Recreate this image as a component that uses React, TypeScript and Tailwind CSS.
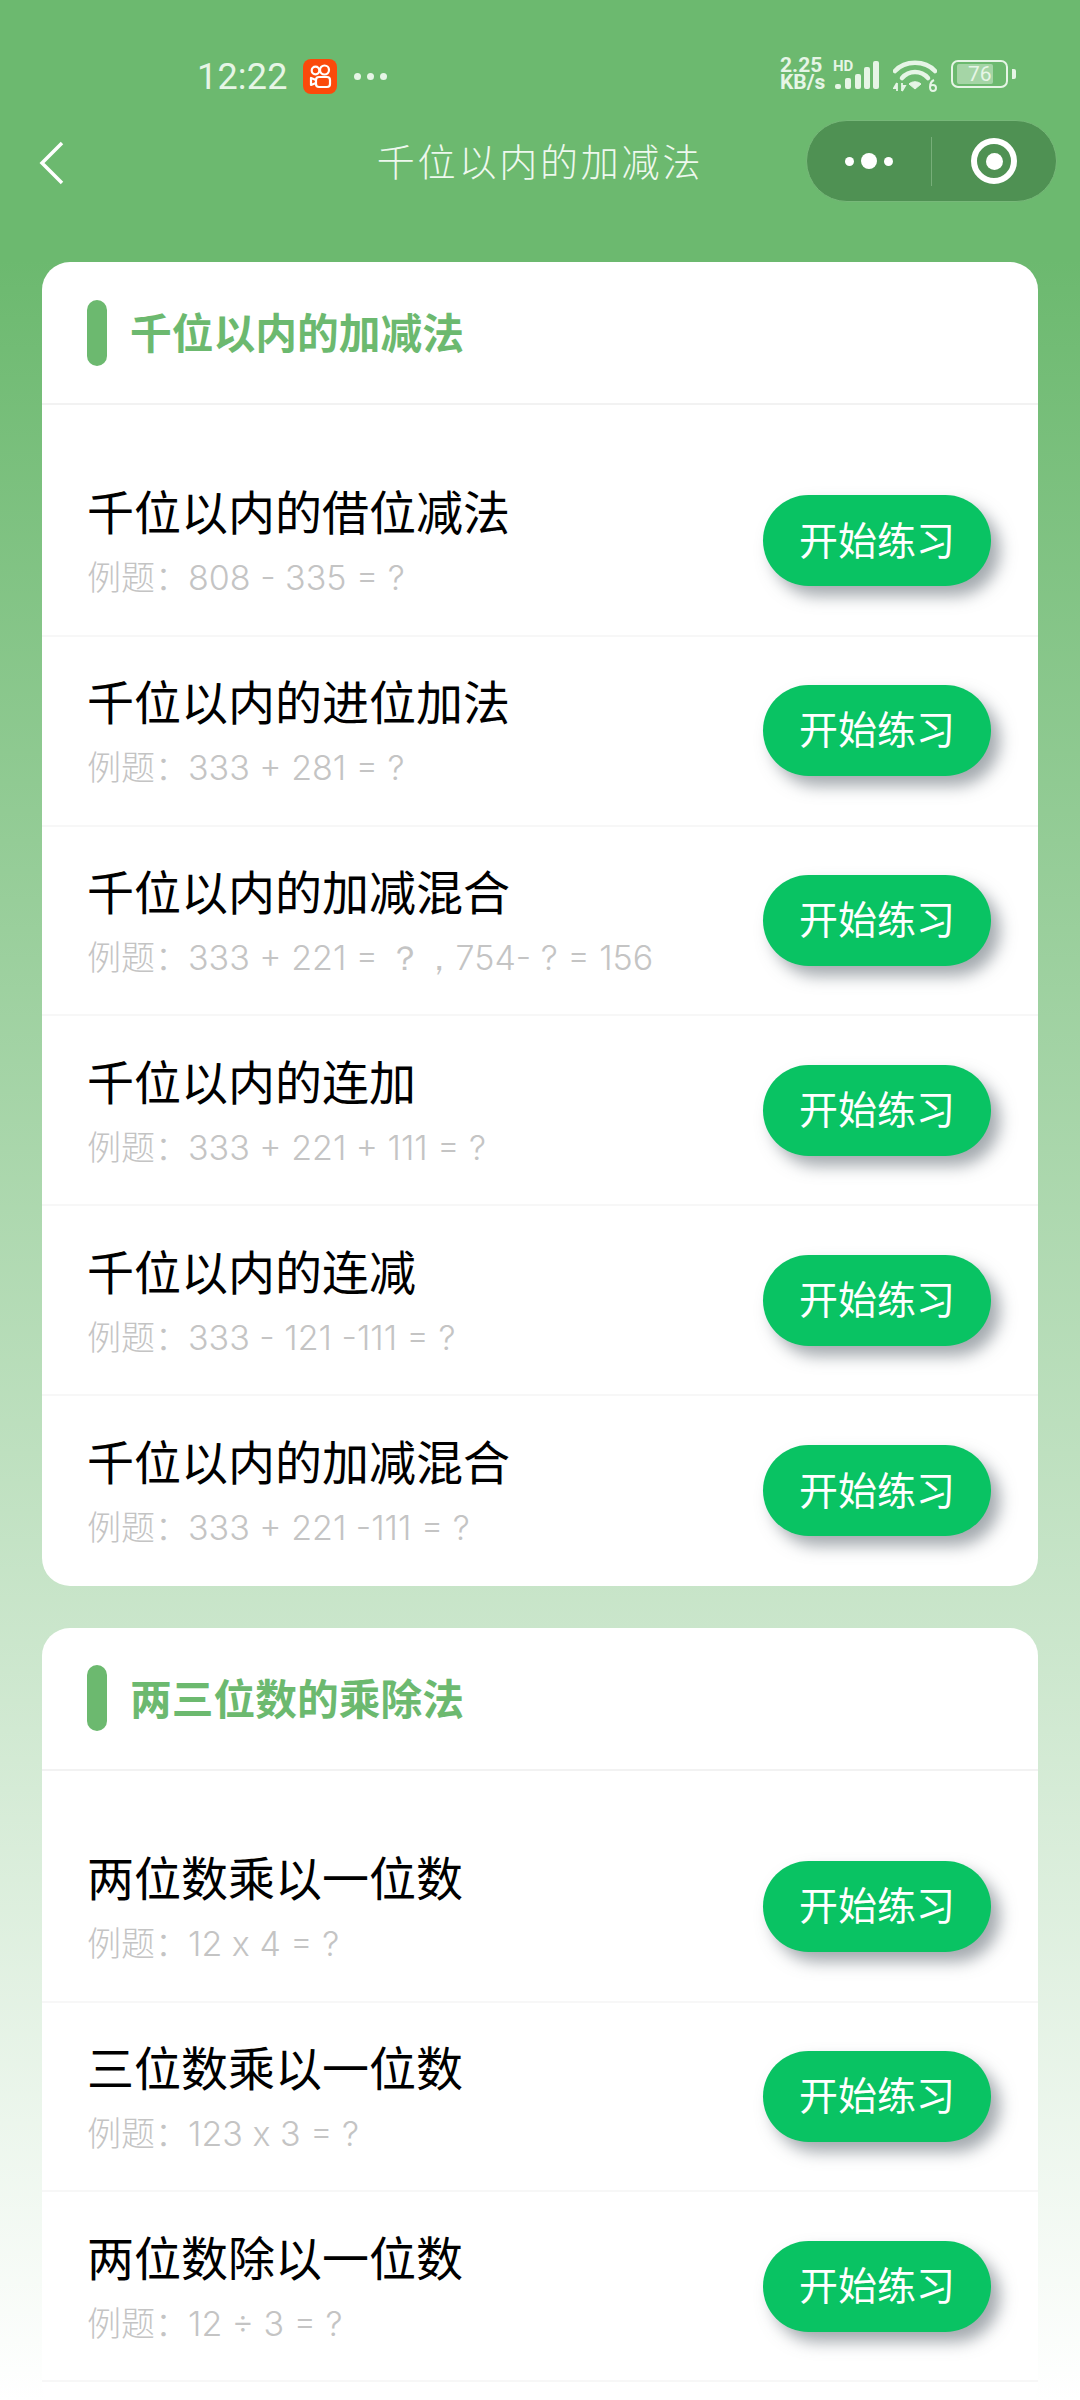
const cjk = "font-['Noto_Sans_CJK_SC','Noto_Sans',sans-serif]"

type Item = { title: string; example: string }

const addSub: Item[] = [
  { title: '千位以内的借位减法', example: '808 - 335 = ?' },
  { title: '千位以内的进位加法', example: '333 + 281 = ?' },
  { title: '千位以内的加减混合', example: '333 + 221 = ？，754- ? = 156' },
  { title: '千位以内的连加', example: '333 + 221 + 111 = ?' },
  { title: '千位以内的连减', example: '333 - 121 -111 = ?' },
  { title: '千位以内的加减混合', example: '333 + 221 -111 = ?' },
]

const mulDiv: Item[] = [
  { title: '两位数乘以一位数', example: '12 x 4 = ?' },
  { title: '三位数乘以一位数', example: '123 x 3 = ?' },
  { title: '两位数除以一位数', example: '12 ÷ 3 = ?' },
]

function KuaishouIcon() {
  return (
    <svg width="34" height="35" viewBox="0 0 34 35" className="shrink-0">
      <rect width="34" height="35" rx="8" fill="#fb4a0b" />
      <g fill="none" stroke="#fff" strokeWidth="2.200">
        <circle cx="12.500" cy="11.500" r="3.800" />
        <circle cx="21.500" cy="11" r="4.500" />
        <rect x="13" y="18" width="14" height="10" rx="3" />
        <path d="M13 21l-5-2v7l5-2" strokeLinejoin="round" />
      </g>
    </svg>
  )
}

function StatusBar() {
  return (
    <div className="h-[110px] flex items-start pt-[57px] text-[#e6f5e6]">
      <div className="flex items-center ml-[197px]">
        <span className="font-['Roboto',sans-serif] text-[36px] leading-[36px] mt-[2px] tracking-[0.2px] w-[110px]">12:22</span>
        <span className="ml-[-4px]"><KuaishouIcon /></span>
        <div className="flex gap-[6px] ml-[17px]">
          <span className="w-[7px] h-[7px] rounded-full bg-[#e6f5e6]" />
          <span className="w-[7px] h-[7px] rounded-full bg-[#e6f5e6]" />
          <span className="w-[7px] h-[7px] rounded-full bg-[#e6f5e6]" />
        </div>
      </div>
      <div className="ml-auto mr-[64px] flex items-start">
        <div className="w-[45px] font-['Roboto',sans-serif] font-bold text-[21px] leading-[17px] whitespace-nowrap">
          2.25<br />KB/s
        </div>
        <div className="relative w-[47px] h-[34px] ml-[8px]">
          <span className="absolute left-0 top-[2px] font-['Roboto',sans-serif] font-bold text-[15px] leading-[14px]">HD</span>
          <svg width="47" height="34" viewBox="0 0 47 34" fill="#e6f5e6" className="absolute left-0 top-0">
            <rect x="2" y="27" width="6" height="5" rx="2" />
            <rect x="12" y="21" width="6" height="11" rx="2" />
            <rect x="22" y="17" width="6" height="15" rx="2" />
            <rect x="31" y="10" width="6" height="22" rx="2" />
            <rect x="40" y="4" width="6" height="28" rx="2" />
          </svg>
        </div>
        <svg width="44" height="35" viewBox="0 0 44 35" fill="none" className="ml-[13px] mt-[2px]">
          <path d="M2 12C12 1 32 1 42 12" stroke="#e6f5e6" strokeWidth="4.500" strokeLinecap="round" />
          <path d="M9 19C16 11 28 11 35 19" stroke="#e6f5e6" strokeWidth="4.500" strokeLinecap="round" />
          <path d="M16 25C19 22 25 22 28 25L22 30Z" fill="#e6f5e6" stroke="#e6f5e6" strokeLinejoin="round" />
          <path d="M4 24v8M4 24l-3 5h3M9 32v-8M9 32l3-5h-3" stroke="#e6f5e6" strokeWidth="1.800" />
          <path d="M41 21c-2 1-4 4-4 7s1 4 3 4 3-1.500 3-3-1-3-3-3-3 1-3 2" stroke="#e6f5e6" strokeWidth="2" />
        </svg>
        <div className="flex items-center ml-[14px] mt-[3px]">
          <div className="relative w-[57px] h-[28px] rounded-[7px] border-2 border-[#e6f5e6] overflow-hidden flex items-center">
            <span className="absolute left-[4px] top-[2px] bottom-[2px] w-[36px] rounded-[2px] bg-[#a5d5a6]" />
            <span className="relative font-['Roboto',sans-serif] text-[21px] leading-[21px] ml-[15px]">76</span>
          </div>
          <span className="w-[4px] h-[10px] ml-[4px] rounded-r-[2px] bg-[#e6f5e6]" />
        </div>
      </div>
    </div>
  )
}

function NavBar() {
  return (
    <div className="h-[100px] grid grid-cols-[1fr_auto_1fr] items-start text-white">
      <div className="pl-[39px] pt-[31px]">
        <svg width="26" height="44" viewBox="0 0 26 44" fill="none">
          <path d="M23 2L3 22l20 20" stroke="#fff" strokeWidth="3.500" />
        </svg>
      </div>
      <h1 className={`${cjk} text-[38px] leading-[56px] pt-[22px] tracking-[2.800px] font-light text-[#eef8ee]`}>千位以内的加减法</h1>
      <div className="flex justify-end pt-[10px] pr-[23px]">
        <div className="w-[251px] h-[82px] rounded-full bg-[#4f9153] border border-[#77b879] flex items-center">
          <div className="w-[124px] flex items-center justify-center gap-[7px]">
            <span className="w-[9px] h-[9px] rounded-full bg-white" />
            <span className="w-[16px] h-[16px] rounded-full bg-white" />
            <span className="w-[9px] h-[9px] rounded-full bg-white" />
          </div>
          <div className="w-px h-[49px] bg-[#77ae79]" />
          <div className="flex-1 flex items-center justify-center">
            <div className="w-[46px] h-[46px] rounded-full border-[6px] border-white flex items-center justify-center">
              <span className="w-[17px] h-[17px] rounded-full bg-white" />
            </div>
          </div>
        </div>
      </div>
    </div>
  )
}

function Row({ item, border }: { item: Item; border: boolean }) {
  return (
    <div className={`h-[189.800px] pl-[45px] pr-[47px] flex items-center justify-between ${border ? 'border-b-2 border-[#f7f7f7]' : ''}`}>
      <div className="mt-[-2px]">
        <div className={`${cjk} text-[47px] leading-[68px] text-black`}>{item.title}</div>
        <div className={`${cjk} font-light text-[34px] leading-[50px] mt-[7px] text-[#c4c4c4]`}>
          例题：<span className="font-['Inter',sans-serif] font-light text-[34px] ml-[-1px]">{item.example}</span>
        </div>
      </div>
      <button className={`${cjk} w-[228px] h-[91px] pb-[6px] rounded-full bg-[#09c363] text-white text-[39px] shadow-[9px_10px_16px_rgba(90,100,110,0.55)]`}>
        开始练习
      </button>
    </div>
  )
}

function Section({ title, items, last }: { title: string; items: Item[]; last?: boolean }) {
  return (
    <section className={`bg-white rounded-[28px] overflow-hidden ${last ? 'pb-[30px]' : ''}`}>
      <div className="h-[143px] pl-[45px] flex items-center gap-[23px] border-b-2 border-[#f2f2f2]">
        <span className="w-[20px] h-[66px] rounded-full bg-[#6cb96f]" />
        <h2 className={`${cjk} text-[41.750px] leading-[58px] pb-[3px] font-bold text-[#6cb96f]`}>{title}</h2>
      </div>
      <div className="pt-[42px]">
        {items.map((item, i) => (
          <Row key={i} item={item} border={last || i < items.length - 1} />
        ))}
      </div>
    </section>
  )
}

export default function App() {
  return (
    <div className="w-[1080px] h-[2400px] overflow-hidden bg-[linear-gradient(180deg,#6cb96f_0px,#6cb96f_260px,#ffffff_2400px)]">
      <StatusBar />
      <NavBar />
      <div className="pt-[52px] px-[42px] flex flex-col gap-[42px]">
        <Section title="千位以内的加减法" items={addSub} />
        <Section title="两三位数的乘除法" items={mulDiv} last />
      </div>
    </div>
  )
}
